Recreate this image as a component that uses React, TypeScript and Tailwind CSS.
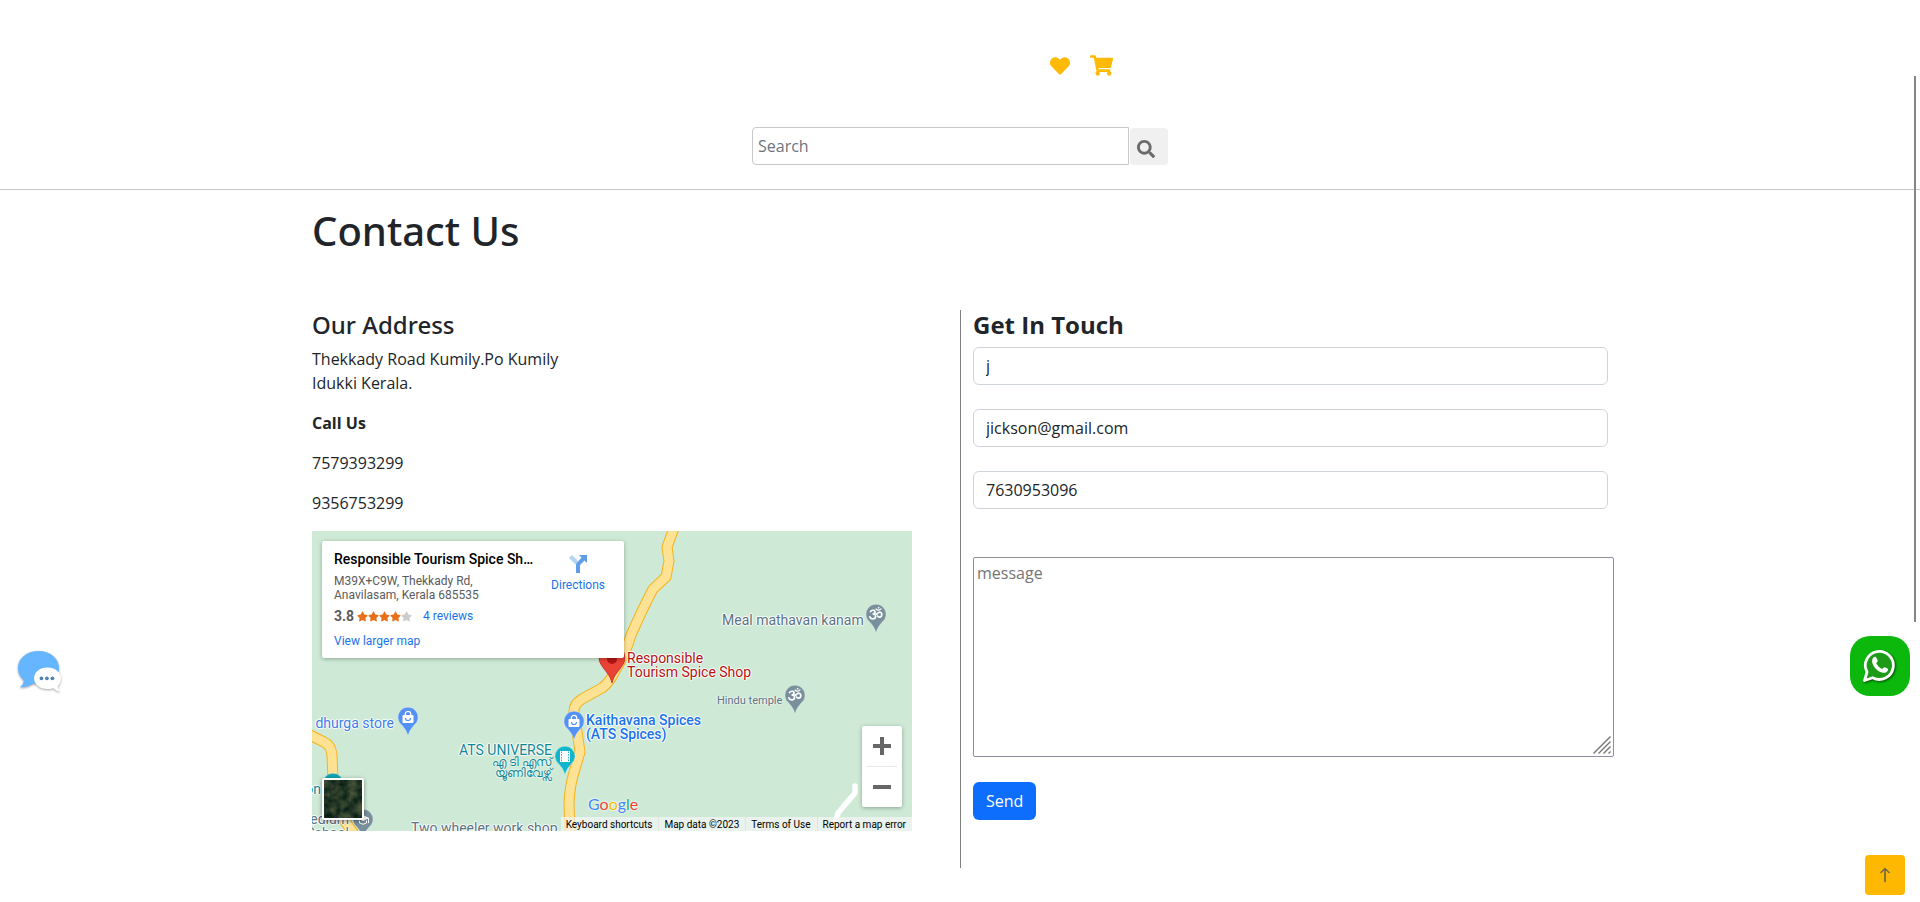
import type { ReactNode } from "react";
import { FaHeart, FaSearch, FaShoppingCart, FaStar } from "react-icons/fa";
import { BsArrowUp } from "react-icons/bs";

const halo =
  "absolute whitespace-nowrap text-sm leading-[14px] [text-shadow:0_0_1px_#fff,1px_0_1px_#fff,-1px_0_1px_#fff,0_1px_1px_#fff,0_-1px_1px_#fff]";

function Pin({ x, y, color, children }: { x: number; y: number; color: string; children?: ReactNode }) {
  return (
    <g transform={`translate(${x} ${y})`}>
      <path
        d="M0 29C-1.2 24-3.2 21.5-6 18.2A10 10 0 1 1 6 18.2C3.200 21.5 1.200 24 0 29Z"
        fill={color}
        stroke="#fff"
        strokeOpacity=".5"
        strokeWidth=".6"
      />
      {children}
    </g>
  );
}

function Bag() {
  return (
    <g>
      <rect x="-5.500" y="8" width="11" height="8" rx="1" fill="#fff" />
      <path d="M-2.700 8.500V7a2.700 2.700 0 0 1 5.400 0v1.500" fill="none" stroke="#fff" strokeWidth="1.300" />
      <path d="M-2.500 11a2.500 2.500 0 0 0 5 0" fill="none" stroke="#5491f5" strokeWidth="1.200" />
    </g>
  );
}

function Om() {
  return (
    <g fill="none" stroke="#fff" strokeWidth="1.700" strokeLinecap="round">
      <path d="M-5.500 7.500C-4 5.500-.8 6-1 8.200-1.100 9.500-2.300 10-3.500 10-1.500 10-.3 11-.5 12.800-.8 15.500-5 15.500-6.200 12.800" />
      <path d="M-1 10.200C1 11 2 7.800 4.200 8.200 6.500 8.800 6.300 13 3.500 13.200 2.300 13.200 2 12.500 1.500 12" />
      <path d="M0 5C1.300 6.500 3.500 6.500 5 4.800" strokeWidth="1.200" />
      <circle cx="2.500" cy="3.800" r=".4" strokeWidth=".9" />
    </g>
  );
}

const mainRoad =
  "M362-3 355 16 357 30 354 46 341 58Q331 77 319 104C315 118 309 130 303 140Q298 151 290 157L270 168Q262 173 262 180L268 221 261 245Q258 255 257 272L258 303";
const sideRoad = "M-4 203 12 211Q19 214 20 224L21 250Q22 278 42 303";

function MapDrawing() {
  return (
    <svg className="absolute inset-0" width="600" height="300" viewBox="0 0 600 300" aria-hidden="true">
      <path d="M543 255V262L526 282 521 303" fill="none" stroke="#fff" strokeWidth="5.500" strokeLinejoin="round" strokeLinecap="round" />
      {[mainRoad, sideRoad].map((d) => (
        <g key={d} fill="none" strokeLinejoin="round">
          <path d={d} stroke="#f6b21b" strokeWidth="11" />
          <path d={d} stroke="#fde293" strokeWidth="9" />
        </g>
      ))}
      <Pin x={564} y={73} color="#78909c"><Om /></Pin>
      <Pin x={483} y={154} color="#78909c"><Om /></Pin>
      <Pin x={96} y={176} color="#5491f5"><Bag /></Pin>
      <Pin x={262} y={180} color="#5491f5"><Bag /></Pin>
      <Pin x={253} y={215} color="#12b5cb">
        <rect x="-5" y="5" width="10" height="11" fill="#fff" />
        <path d="M-3.500 5.500v10M3.500 5.500v10" stroke="#12b5cb" strokeWidth="1" strokeDasharray="1.500 1.200" />
      </Pin>
      <Pin x={21} y={242} color="#12a5b5" />
      <Pin x={51} y={278} color="#78909c">
        <path d="M-6 9 0 6 6 9 0 12Z" fill="#fff" />
        <path d="M-3.500 11.500v2.500q3.500 2.500 7 0v-2.500M5.500 9v5" fill="none" stroke="#fff" />
      </Pin>
      <path d="M300 152C298 144 294 141 290 135A13 13 0 1 1 310 135C306 141 302 144 300 152Z" fill="#ea4335" stroke="#b31412" strokeWidth=".6" />
      <circle cx="300" cy="128" r="5" fill="#b31412" />
    </svg>
  );
}

function PlaceCard() {
  return (
    <div className="absolute left-[10px] top-[10px] flex h-[117px] w-[302px] justify-between rounded-xs bg-white pl-3 pr-[19px] shadow-[0_1px_4px_rgba(0,0,0,0.3)]">
      <div className="pt-[10px] text-xs leading-[14px] text-[#5b5b5b]">
        <p className="w-[200px] truncate text-sm leading-4 font-medium text-black">Responsible Tourism Spice Shop</p>
        <p className="mt-[7px]">
          M39X+C9W, Thekkady Rd,
          <br />
          Anavilasam, Kerala 685535
        </p>
        <div className="mt-[6px] flex items-center">
          <span className="w-[23px] text-sm leading-4 font-bold">3.8</span>
          <span className="flex text-[11px] text-[#e7711b]">
            <FaStar /><FaStar /><FaStar /><FaStar /><FaStar className="text-[#ccc]" />
          </span>
          <a href="#reviews" className="ml-[11px] text-[#1a73e8]">4 reviews</a>
        </div>
        <a href="#map" className="mt-[10px] block text-[#1a73e8]">View larger map</a>
      </div>
      <a href="#directions" className="flex flex-col items-center pt-[14px] text-xs leading-[14px] text-[#1a73e8]">
        <svg width="18" height="18" viewBox="0 0 18 18" className="mb-[5px]" aria-hidden="true">
          <path d="M0 3 3 0 9.500 6.500 6.500 9.500Z" fill="#b5d3f7" />
          <path d="M10 0h8v8l-2.500-2.500L11 10v8H7V9l5.500-6.500Z" fill="#5f9de8" />
        </svg>
        Directions
      </a>
    </div>
  );
}

function LocationMap() {
  return (
    <section aria-label="Map" className="relative h-[300px] w-[600px] max-w-full overflow-hidden bg-[#ceead6] font-[Roboto,'Liberation_Sans',sans-serif]">
      <MapDrawing />
      <span className={`${halo} left-[410px] top-[82px] text-[#5b7282]`}>Meal mathavan kanam</span>
      <span className="absolute left-[405px] top-[163px] text-[11px] leading-[14px] whitespace-nowrap text-[#5b7282] [text-shadow:0_0_2px_#fff,0_0_2px_#fff]">Hindu temple</span>
      <span className={`${halo} left-[315px] top-[120px] text-[#b31412]`}>Responsible<br />Tourism Spice Shop</span>
      <span className={`${halo} left-[274px] top-[182px] font-medium text-[#1a73e8]`}>Kaithavana Spices<br />(ATS Spices)</span>
      <span className={`${halo} right-[518px] top-[185px] text-[#3f7ee8]`}>a dhurga store</span>
      <span className={`${halo} right-[360px] top-[212px] text-[#108797]`}>ATS UNIVERSE</span>
      <span className="absolute right-[360px] top-[226px] text-right text-xs leading-[11px] whitespace-nowrap text-[#108797] [text-shadow:0_0_2px_#fff,0_0_2px_#fff]">എ ടി എസ്<br />യൂണിവേഴ്സ്</span>
      <span className={`${halo} right-[591px] top-[251px] text-[#108797]`}>on</span>
      <span className={`${halo} right-[563px] top-[281px] text-right text-[#5b7282]`}>edium<br />School</span>
      <span className={`${halo} left-[99px] top-[290px] text-[#5b7282]`}>Two wheeler work shop</span>
      <PlaceCard />
      <button type="button" aria-label="Show satellite imagery" className="absolute left-[10px] top-[247px] size-[42px] overflow-hidden rounded-xs border-2 border-white bg-[#1f3524] shadow-[0_1px_4px_rgba(0,0,0,0.4)]">
        <svg width="38" height="38" viewBox="0 0 38 38" aria-hidden="true">
          <defs>
            <filter id="forest" x="0" y="0" width="100%" height="100%" colorInterpolationFilters="sRGB">
              <feTurbulence type="fractalNoise" baseFrequency="0.12" numOctaves="4" seed="4" />
              <feColorMatrix values="0.4 0 0 0 -0.05  0.34 0 0 0 0.05  0.22 0 0 0 0.04  0 0 0 0 1" />
            </filter>
          </defs>
          <rect width="38" height="38" filter="url(#forest)" />
        </svg>
      </button>
      <a href="#google" aria-label="Google" className="absolute left-[276px] top-[263px] font-[Lato,sans-serif] text-base leading-[20px] [text-shadow:0_0_2px_#fff,0_0_2px_#fff]">
        <span className="text-[#4285f4]">G</span><span className="text-[#ea4335]">o</span><span className="text-[#fbbc04]">o</span><span className="text-[#4285f4]">g</span><span className="text-[#34a853]">l</span><span className="text-[#ea4335]">e</span>
      </a>
      <div className="absolute right-[10px] top-[195px] flex h-[81px] w-10 flex-col items-center rounded-xs bg-white shadow-[0_1px_4px_rgba(0,0,0,0.3)]">
        <button type="button" aria-label="Zoom in" className="grid w-full flex-1 place-items-center">
          <svg width="18" height="18" viewBox="0 0 18 18" aria-hidden="true"><path d="M7 0h4v7h7v4h-7v7H7v-7H0V7h7Z" fill="#666" /></svg>
        </button>
        <div className="h-px w-[30px] bg-[#e6e6e6]" />
        <button type="button" aria-label="Zoom out" className="grid w-full flex-1 place-items-center">
          <svg width="18" height="4" viewBox="0 0 18 4" aria-hidden="true"><path d="M0 0h18v4H0Z" fill="#666" /></svg>
        </button>
      </div>
      <div className="absolute right-0 bottom-0 flex h-[14px] divide-x divide-[#dfe6e1] bg-[#f5f5f5]/70 text-[10px] leading-4 whitespace-nowrap text-black">
        <button type="button" className="pr-[6px] pl-[5px]">Keyboard shortcuts</button>
        <span className="pr-[6px] pl-[5px]">Map data ©2023</span>
        <a href="#terms" className="pr-[6px] pl-[5px]">Terms of Use</a>
        <a href="#report" className="pr-[6px] pl-[5px]">Report a map error</a>
      </div>
    </section>
  );
}

const field =
  "block h-[38px] w-full rounded-md border border-[#ced4da] bg-white px-3 text-base text-[#212529] outline-none";

function ContactForm() {
  return (
    <form className="border-l border-[#808080] pr-3 pb-12 pl-3" onSubmit={(e) => e.preventDefault()}>
      <h4 className="mb-2 text-2xl leading-[29px] font-bold">Get In Touch</h4>
      <div className="space-y-6">
        <input type="text" aria-label="Name" defaultValue="j" className={field} />
        <input type="email" aria-label="Email" defaultValue="jickson@gmail.com" className={field} />
        <input type="tel" aria-label="Phone" defaultValue="7630953096" className={field} />
      </div>
      <div className="relative mt-12 w-[641px]">
        <textarea aria-label="Message" placeholder="message" className="block h-[200px] w-full resize-none rounded-xs border border-[#8f8f9d] bg-white px-[3px] py-[3px] text-base leading-6 outline-none placeholder:text-[#757575]" />
        <svg width="18" height="18" viewBox="0 0 18 18" className="absolute right-[3px] bottom-[3px]" aria-hidden="true">
          <path d="M.5 17.500 17.500.5M5.500 17.500 17.500 5.500M10.500 17.500 17.500 10.500M15.500 17.500 17.500 15.500" stroke="#757575" strokeWidth="1.400" />
        </svg>
      </div>
      <button type="submit" className="mt-[25px] h-[38px] rounded-md bg-[#0d6efd] px-[13px] text-base text-white">Send</button>
    </form>
  );
}

function FloatingActions() {
  return (
    <>
      <button type="button" aria-label="Open chat" className="fixed bottom-[208px] left-[15px]">
        <svg width="47" height="47" viewBox="0 0 48 48" className="drop-shadow-[0_1px_1px_rgba(0,0,0,0.35)]" aria-hidden="true">
          <path d="M24 4C12 4 3 11.500 3 21.500 3 27 5.500 31 9 34 9 37 7.500 39.500 5 41 10 41.500 15 40 18 37.500 34 40 45 32.500 45 21.500 45 11.500 36 4 24 4Z" fill="#66b5ff" />
          <path d="M33 21C25 21 19.500 26 19.500 32S25 43 33 43Q36 43 39 42 42 45 46 45.500 43.500 43 43.500 40C46 38 47 35 47 32 47 26 41 21 33 21Z" fill="#fff" />
          <g fill="#4f83ad"><circle cx="27" cy="32" r="1.900" /><circle cx="32.600" cy="32" r="1.900" /><circle cx="38.200" cy="32" r="1.900" /></g>
        </svg>
      </button>
      <a href="#whatsapp" aria-label="WhatsApp" className="fixed right-[10px] bottom-[206px] grid size-[60px] place-items-center rounded-[20px] bg-[#0bb80b]">
        <svg width="36" height="36" viewBox="0 0 36 36" className="drop-shadow-[1px_1px_1px_rgba(0,0,0,0.6)]" aria-hidden="true">
          <path d="M2.500 32.500 5 24A14 14 0 1 1 10.700 29.700Z" fill="#1c9a18" stroke="#fff" strokeWidth="2.800" strokeLinejoin="round" />
          <path d="M11 10C12.500 8 14 8.500 14.700 10.200L15.700 12.500C16 13.500 14.500 14.700 14.200 15.300 15.500 18 17.500 19.800 20.200 20.900 21 20.500 21.800 18.800 22.800 19.200L25.500 20.500C26.800 21.200 25.800 23.500 24 24.400 17.500 27 7 16 11 10Z" fill="#fff" />
        </svg>
      </a>
      <button type="button" aria-label="Back to top" className="fixed right-[15px] bottom-[7px] grid size-10 place-items-center rounded-sm bg-[#ffb800] text-base text-[#5f5f4c]">
        <BsArrowUp strokeWidth={0.5} />
      </button>
      <div aria-hidden="true" className="fixed top-[76px] right-1 h-[546px] w-[2px] bg-[#858585]" />
    </>
  );
}

export default function App() {
  return (
    <div className="bg-white font-['Open_Sans','Noto_Sans',sans-serif] text-base text-[#212529]">
      <header className="border-b border-[#c8c8c8] pt-[54px] pb-6">
        <nav aria-label="Shop" className="flex items-center justify-center gap-5 pl-[243px] text-[#ffb907]">
          <a href="#wishlist" aria-label="Wishlist"><FaHeart size={20} /></a>
          <a href="#cart" aria-label="Cart"><FaShoppingCart size={23} /></a>
        </nav>
        <form role="search" className="mt-[50px] flex items-end justify-center gap-px" onSubmit={(e) => e.preventDefault()}>
          <input type="search" aria-label="Search" placeholder="Search" className="h-[38px] w-[377px] rounded-l-sm border border-[#c8c8c8] px-[5px] text-base outline-none placeholder:text-[#6c757d]" />
          <button type="submit" aria-label="Submit search" className="h-[37px] w-[38px] rounded-sm bg-[#f0f0f0] pt-1 pl-[7px] text-lg text-[#6b6b6b]"><FaSearch /></button>
        </form>
      </header>
      <main className="mx-auto max-w-[1320px]">
        <h1 className="mt-[17px] px-3 font-['Noto_Sans','Open_Sans',sans-serif] text-[40px] leading-[48px] font-medium">Contact Us</h1>
        <div className="mt-[55px] grid grid-cols-2">
          <section className="px-3">
            <h4 className="mb-2 font-['Noto_Sans','Open_Sans',sans-serif] text-2xl leading-[29px] font-medium">Our Address</h4>
            <address className="not-italic">
              Thekkady Road Kumily.Po Kumily
              <br />
              Idukki Kerala.
            </address>
            <p className="mt-4 font-bold">Call Us</p>
            <p className="mt-4">7579393299</p>
            <p className="my-4">9356753299</p>
            <LocationMap />
          </section>
          <ContactForm />
        </div>
      </main>
      <FloatingActions />
    </div>
  );
}
